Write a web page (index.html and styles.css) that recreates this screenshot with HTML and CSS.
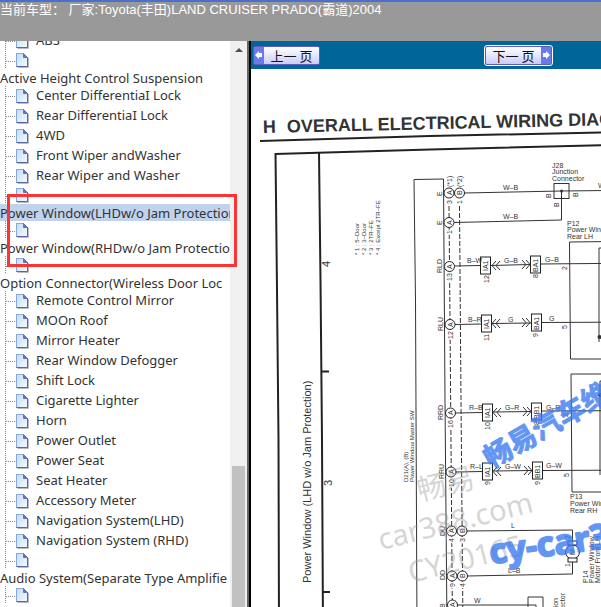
FILE: index.html
```html
<!DOCTYPE html>
<html lang="zh-CN">
<head>
  <meta charset="UTF-8">
  <title>LAND CRUISER PRADO 2004</title>
  <link rel="stylesheet" href="styles.css">
</head>
<body>

<svg class="defs" aria-hidden="true">
  <defs>
    <linearGradient id="paper" x1="0" y1="0" x2="1" y2="1">
      <stop offset="0" stop-color="#c4dcf8"/>
      <stop offset="1" stop-color="#f4fbff"/>
    </linearGradient>
    <symbol id="page" viewBox="0 0 13 15">
      <path d="M1.5 14.5h11V5" fill="none" stroke="#b9b9c4"/>
      <path d="M.5.5h7l4 4v9H.5z" fill="url(#paper)" stroke="#6f83bd"/>
      <path d="M.5 13V.5h7" fill="none" stroke="#84a9de"/>
      <path d="M7.5.5v4h4z" fill="#6474b4" stroke="#6474b4"/>
      <path d="M.5 13.5h11v-9" fill="none" stroke="#5b66a5"/>
    </symbol>
  </defs>
</svg>

<header class="topbar">当前车型： 厂家:Toyota(丰田)LAND CRUISER PRADO(霸道)2004</header>

<div class="frames">
  <nav class="sidebar">
    <ul class="tree">
      <li><svg class="icon"><use href="#page"/></svg><a href="#">ABS</a></li>
      <li class="blank"><svg class="icon"><use href="#page"/></svg></li>
      <li class="group"><a href="#">Active Height Control Suspension</a></li>
      <li><svg class="icon"><use href="#page"/></svg><a href="#">Center DifferentiaI Lock</a></li>
      <li><svg class="icon"><use href="#page"/></svg><a href="#">Rear DifferentiaI Lock</a></li>
      <li><svg class="icon"><use href="#page"/></svg><a href="#">4WD</a></li>
      <li><svg class="icon"><use href="#page"/></svg><a href="#">Front Wiper andWasher</a></li>
      <li><svg class="icon"><use href="#page"/></svg><a href="#">Rear Wiper and Washer</a></li>
      <li class="blank"><svg class="icon"><use href="#page"/></svg></li>
      <li class="group selected"><a href="#">Power Window(LHDw/o Jam Protection)</a></li>
      <li class="blank"><svg class="icon"><use href="#page"/></svg></li>
      <li class="group"><a href="#">Power Window(RHDw/o Jam Protection)</a></li>
      <li class="blank"><svg class="icon"><use href="#page"/></svg></li>
      <li class="group"><a href="#">Option Connector(Wireless Door Loc</a></li>
      <li><svg class="icon"><use href="#page"/></svg><a href="#">Remote Control Mirror</a></li>
      <li><svg class="icon"><use href="#page"/></svg><a href="#">MOOn Roof</a></li>
      <li><svg class="icon"><use href="#page"/></svg><a href="#">Mirror Heater</a></li>
      <li><svg class="icon"><use href="#page"/></svg><a href="#">Rear Window Defogger</a></li>
      <li><svg class="icon"><use href="#page"/></svg><a href="#">Shift Lock</a></li>
      <li><svg class="icon"><use href="#page"/></svg><a href="#">Cigarette Lighter</a></li>
      <li><svg class="icon"><use href="#page"/></svg><a href="#">Horn</a></li>
      <li><svg class="icon"><use href="#page"/></svg><a href="#">Power Outlet</a></li>
      <li><svg class="icon"><use href="#page"/></svg><a href="#">Power Seat</a></li>
      <li><svg class="icon"><use href="#page"/></svg><a href="#">Seat Heater</a></li>
      <li><svg class="icon"><use href="#page"/></svg><a href="#">Accessory Meter</a></li>
      <li><svg class="icon"><use href="#page"/></svg><a href="#">Navigation System(LHD)</a></li>
      <li><svg class="icon"><use href="#page"/></svg><a href="#">Navigation System (RHD)</a></li>
      <li class="blank"><svg class="icon"><use href="#page"/></svg></li>
      <li class="group"><a href="#">Audio System(Separate Type Amplifie</a></li>
      <li class="blank"><svg class="icon"><use href="#page"/></svg></li>
    </ul>
    <div class="scrollbar">
      <div class="arrow-up"></div>
      <div class="thumb"></div>
    </div>
    <div class="marker"></div>
  </nav>

  <main class="viewer">
    <div class="pager">
      <button type="button" class="page-btn">
        <span class="arrow"><svg viewBox="0 0 10 16"><path d="M1 8l4-4v2h3v4H5v2z" fill="#fff"/></svg></span>
        <span class="label">上一 页</span>
      </button>
      <button type="button" class="page-btn next">
        <span class="label">下一 页</span>
        <span class="arrow"><svg viewBox="0 0 10 16"><path d="M9 8L5 4v2H2v4h3v2z" fill="#fff"/></svg></span>
      </button>
    </div>

    <svg class="diagram" viewBox="251 69 400 560" width="400" height="560">
      <!-- sheet title and frame -->
      <g class="title" transform="rotate(-1.3 264 133)">
        <text x="263" y="133">H</text>
        <text x="287" y="133">OVERALL ELECTRICAL WIRING DIAGRAM</text>
      </g>
      <g class="frame">
        <path d="M260 141L430 136L651 131.500"/>
        <path d="M275 154L430 149.500L651 144"/>
        <path d="M275.500 153L277 290L278.500 440L279 629"/>
        <path d="M319 152L320.500 280L322 440L323 629"/>
        <path d="M322 371.500h7M323 592h7"/>
      </g>
      <text class="sheet" transform="translate(330 267) rotate(-90)">4</text>
      <text class="sheet" transform="translate(332 486) rotate(-90)">3</text>
      <text class="sheet" transform="translate(311 583) rotate(-90)">Power Window (LHD w/o Jam Protection)</text>

      <g class="tiny small">
        <text transform="translate(359 255) rotate(-90)">* 1 : 5–Door</text>
        <text transform="translate(366 255) rotate(-90)">* 2 : 3–Door</text>
        <text transform="translate(373 255) rotate(-90)">* 3 : 2TR–FE</text>
        <text transform="translate(380 255) rotate(-90)">* 4 : Except 2TR–FE</text>
        <text transform="translate(408 482) rotate(-90)">D21(A), (B)</text>
        <text transform="translate(414 482) rotate(-90)">Power Window Master SW</text>
      </g>

      <!-- master switch -->
      <g class="wire">
        <path d="M417 629L415.500 300L414 179.500L443.500 179L445 400L447 629"/>
        <path class="dash" d="M449 206L450 320L452.500 629M459.500 206L461 400L463 629"/>
      </g>

      <!-- wires -->
      <g class="wire">
        <path d="M464.500 193L561.500 191L651 190M561.500 191V220L454 222.500"/>
        <path d="M454.500 266L480 265.500M491 265.500L530 264.500M540 264L651 263"/>
        <path d="M455 324.500L481 324M492 323.500L531 323M541 322.500L651 322"/>
        <path d="M455.500 413L482 412.500M493 412L532 411.500M542 411L651 410.500"/>
        <path d="M456 472L482 471.500M493 471L532 470.500M542 470.500L651 470"/>
        <path d="M467 531L572.500 530V541M467 576L572.500 574V562"/>
        <path d="M457 605H536M528 629V597h15v32M536 605v24"/>
        <path d="M651 241L569.500 242L570.500 359H651M651 374H571L572 492H651"/>
        <path d="M651 248H599V342M651 381H600V475"/>
        <rect x="554" y="183.500" width="15" height="15"/>
      </g>
      <circle cx="561.500" cy="191" r="1.500"/>
      <circle cx="599.500" cy="337" r="2"/>
      <circle cx="600" cy="395" r="2"/>

      <g class="wire arrows">
        <path d="M496 261l-4 4.500l4 4.500M500 261l-4 4.500l4 4.500M522 260l4 4.500l-4 4.500M526 260l4 4.500l-4 4.500"/>
        <path d="M496 319l-4 4.500l4 4.500M500 319l-4 4.500l4 4.500M522 318l4 4.500l-4 4.500M526 318l4 4.500l-4 4.500"/>
        <path d="M497 408l-4 4.500l4 4.500M501 408l-4 4.500l4 4.500M523 407l4 4.500l-4 4.500M527 407l4 4.500l-4 4.500"/>
        <path d="M497 467l-4 4.500l4 4.500M501 467l-4 4.500l4 4.500M524 466l4 4.500l-4 4.500M528 466l4 4.500l-4 4.500"/>
      </g>

      <!-- pin numbers on the switch, with the dashes broken behind them -->
      <g class="tiny number">
        <text transform="translate(452 187) rotate(-90)">(*1)</text>
        <text transform="translate(462 187) rotate(-90)">(*2)</text>
        <text transform="translate(452 204) rotate(-90)">3</text>
        <text transform="translate(462 204) rotate(-90)">1</text>
        <text transform="translate(452 234) rotate(-90)">1</text>
        <text transform="translate(452 281) rotate(-90)">13</text>
        <text transform="translate(453 339) rotate(-90)">12</text>
        <text transform="translate(453 428) rotate(-90)">16</text>
        <text transform="translate(454 487) rotate(-90)">10</text>
        <text transform="translate(454 542) rotate(-90)">4</text>
        <text transform="translate(465 542) rotate(-90)">3</text>
        <text transform="translate(455 587) rotate(-90)">9</text>
        <text transform="translate(465 587) rotate(-90)">4</text>
      </g>

      <g class="pin">
        <rect x="480.500" y="257" width="10" height="17"/>
        <rect x="530.500" y="256" width="10" height="17"/>
        <rect x="481.500" y="315" width="10" height="17"/>
        <rect x="531.500" y="314" width="10" height="17"/>
        <rect x="482.500" y="404" width="10" height="17"/>
        <rect x="531.500" y="403" width="10" height="17"/>
        <rect x="482.500" y="463" width="10" height="17"/>
        <rect x="532.500" y="462" width="10" height="17"/>
        <circle cx="449" cy="193" r="5"/>
        <circle cx="459.500" cy="193" r="5"/>
        <circle cx="449" cy="222.500" r="5"/>
        <circle cx="449.500" cy="266.500" r="5"/>
        <circle cx="450" cy="324.500" r="5"/>
        <circle cx="450.500" cy="413" r="5"/>
        <circle cx="451" cy="472" r="5"/>
        <circle cx="451.500" cy="531" r="5"/>
        <circle cx="462" cy="531" r="5"/>
        <circle cx="452" cy="576" r="5"/>
        <circle cx="462.500" cy="576" r="5"/>
        <circle cx="452.500" cy="605" r="5"/>
        <circle cx="572.500" cy="552" r="7"/>
        <rect x="568" y="541" width="9" height="4"/>
        <rect x="568" y="558" width="9" height="4"/>
      </g>

      <!-- wire colours -->
      <g class="tiny">
        <text x="503" y="190">W–B</text>
        <text x="503" y="219">W–B</text>
        <text x="598" y="188">W–B</text>
        <text x="467" y="263">B–W</text>
        <text x="504" y="263">G–B</text>
        <text x="545" y="262">G–B</text>
        <text x="468" y="322">B–R</text>
        <text x="508" y="322">G</text>
        <text x="549" y="321">G</text>
        <text x="469" y="410">R–B</text>
        <text x="505" y="410">G–R</text>
        <text x="546" y="410">G–R</text>
        <text x="470" y="469">R–L</text>
        <text x="505" y="469">G–W</text>
        <text x="546" y="468">G–W</text>
        <text x="511" y="528">L</text>
        <text x="508" y="573">L–B</text>
        <text x="474" y="603">W</text>
        <text x="552" y="168">J28</text>
        <text x="552" y="174">Junction</text>
        <text x="552" y="181">Connector</text>
        <text x="567" y="226">P12</text>
        <text x="567" y="232">Power Window</text>
        <text x="567" y="239">Rear LH</text>
        <text x="570" y="499">P13</text>
        <text x="570" y="506">Power Window</text>
        <text x="570" y="513">Rear RH</text>
      </g>

      <!-- terminals and connectors, read from the side -->
      <g class="tiny">
        <text transform="translate(442 196) rotate(-90)">E</text>
        <text transform="translate(442 225) rotate(-90)">E</text>
        <text transform="translate(442 273) rotate(-90)">RLD</text>
        <text transform="translate(443 331) rotate(-90)">RLU</text>
        <text transform="translate(443 420) rotate(-90)">RRD</text>
        <text transform="translate(444 479) rotate(-90)">RRU</text>
        <text transform="translate(445 536) rotate(-90)">DU</text>
        <text transform="translate(445 580) rotate(-90)">DD</text>
        <text transform="translate(445 608) rotate(-90)">B</text>

        <text transform="translate(452 195) rotate(-90)">A</text>
        <text transform="translate(462 195) rotate(-90)">B</text>
        <text transform="translate(452 225) rotate(-90)">A</text>
        <text transform="translate(452 269) rotate(-90)">A</text>
        <text transform="translate(453 327) rotate(-90)">A</text>
        <text transform="translate(453 415) rotate(-90)">A</text>
        <text transform="translate(454 474) rotate(-90)">A</text>
        <text transform="translate(454 533) rotate(-90)">A</text>
        <text transform="translate(465 533) rotate(-90)">B</text>
        <text transform="translate(455 578) rotate(-90)">A</text>
        <text transform="translate(465 578) rotate(-90)">B</text>
        <text transform="translate(455 607) rotate(-90)">A</text>
        <text transform="translate(575 555) rotate(-90)">M</text>

        <text transform="translate(488 271) rotate(-90)">IA1</text>
        <text transform="translate(538 272) rotate(-90)">BA1</text>
        <text transform="translate(489 329) rotate(-90)">IA1</text>
        <text transform="translate(539 330) rotate(-90)">BA1</text>
        <text transform="translate(490 418) rotate(-90)">IA1</text>
        <text transform="translate(539 419) rotate(-90)">BB1</text>
        <text transform="translate(490 477) rotate(-90)">IA1</text>
        <text transform="translate(540 478) rotate(-90)">BB1</text>

        <text transform="translate(489 283) rotate(-90)">12</text>
        <text transform="translate(538 278) rotate(-90)">8</text>
        <text transform="translate(489 341) rotate(-90)">11</text>
        <text transform="translate(538 337) rotate(-90)">9</text>
        <text transform="translate(490 430) rotate(-90)">10</text>
        <text transform="translate(539 425) rotate(-90)">8</text>
        <text transform="translate(490 485) rotate(-90)">9</text>
        <text transform="translate(540 485) rotate(-90)">9</text>
        <text transform="translate(567 270) rotate(-90)">2</text>
        <text transform="translate(567 329) rotate(-90)">5</text>
        <text transform="translate(568 417) rotate(-90)">2</text>
        <text transform="translate(569 477) rotate(-90)">5</text>
        <text transform="translate(570 539) rotate(-90)">2</text>
        <text transform="translate(570 567) rotate(-90)">1</text>
        <text transform="translate(551 198) rotate(-90)">B</text>
        <text transform="translate(559 207) rotate(-90)">B</text>
        <text transform="translate(578 197) rotate(-90)">B</text>

        <text transform="translate(588 583) rotate(-90)">P14</text>
        <text transform="translate(594 583) rotate(-90)">Power Window</text>
        <text transform="translate(600 583) rotate(-90)">Motor Front LH</text>
        <text class="from-top" transform="translate(558 598) rotate(-90)">Junction</text>
        <text class="from-top" transform="translate(565 593) rotate(-90)">Connector</text>
      </g>

      <!-- watermarks -->
      <g class="mark-grey">
        <text transform="translate(420 501) rotate(-14)">畅易</text>
        <text transform="translate(381 550) rotate(-14)">car388.com</text>
        <text transform="translate(411 583) rotate(-14)">CY20165</text>
      </g>
      <g class="mark-blue">
        <text transform="translate(491 469) rotate(-30)">畅易汽车维修</text>
        <text class="latin" transform="translate(491 564) rotate(-8)">cy-car388</text>
      </g>
    </svg>
  </main>
</div>

</body>
</html>
```
FILE: styles.css
```css
* {
  box-sizing: border-box;
}
body {
  margin: 0;
  height: 100vh;
  display: flex;
  flex-direction: column;
  overflow: hidden;
  background: #fff;
  font-family: "Noto Sans", "Noto Sans CJK SC", sans-serif;
}
.defs {
  position: absolute;
  width: 0;
  height: 0;
}
.topbar {
  flex: none;
  height: 41px;
  border-top: 2px solid #4a6fd0;
  background: #999;
  color: #fff;
  font: 13px/16px "Liberation Sans", "Noto Sans CJK SC", sans-serif;
  white-space: nowrap;
}
.frames {
  flex: 1;
  min-height: 0;
  display: flex;
}

/* left tree */
.sidebar {
  position: relative;
  flex: none;
  width: 251px;
  display: flex;
  overflow: hidden;
  border-right: 2px solid #000;
}
.tree {
  flex: 1;
  min-width: 0;
  margin: -10px 0 0;
  padding: 0;
  list-style: none;
  overflow: hidden;
  font-size: 13px;
}
.tree li {
  display: flex;
  align-items: center;
  height: 20px;
  white-space: nowrap;
  background: repeating-linear-gradient(#888 0 1px, transparent 1px 2px) 5px 0 / 1px 100% no-repeat,
    repeating-linear-gradient(90deg, #888 0 1px, transparent 1px 2px) 6px 10px / 10px 1px no-repeat;
}
.tree a {
  padding-bottom: 2px;
  color: #333;
  text-decoration: none;
}
.tree .icon {
  flex: none;
  width: 13px;
  height: 15px;
  margin: 1px 7px 0 16px;
}
.tree .blank {
  height: 18px;
}
.tree .group {
  height: 17px;
  background: none;
}
.tree .group a {
  padding: 0;
}
.tree .selected {
  background: #c0d2ec;
}
.scrollbar {
  flex: none;
  width: 19px;
  background: #f0f0f0;
  border-right: 2px solid #666;
  display: flex;
  flex-direction: column;
  align-items: center;
}
.arrow-up {
  margin-top: 7px;
  border: 4px solid transparent;
  border-top: 0;
  border-bottom-color: #505050;
}
.thumb {
  width: 13px;
  margin-top: auto;
  height: 25%;
  background: #c1c1c1;
}
.marker {
  position: absolute;
  left: 7px;
  top: 153px;
  width: 230px;
  height: 73px;
  border: 3px solid #fa3535;
}

/* diagram frame */
.viewer {
  flex: 1;
  min-width: 0;
  overflow: hidden;
}
.pager {
  display: flex;
  gap: 165px;
  height: 28px;
  padding: 5px 2px;
  background: #069;
}
.page-btn {
  flex: none;
  display: flex;
  width: 67px;
  height: 19px;
  padding: 0;
  border: 1px solid #5b5bc0;
  border-radius: 2px;
  background: linear-gradient(#fff, #c9cdf8);
  color: #111;
  font: 13px/17px "Noto Sans CJK SC", sans-serif;
  cursor: pointer;
}
.page-btn.next {
  outline: 1px solid #fff;
}
.page-btn .label {
  flex: 1;
  text-align: center;
}
.page-btn .arrow {
  width: 10px;
  background: #6a7ae6;
}
.page-btn svg {
  display: block;
  width: 10px;
  height: 16px;
}
.diagram {
  display: block;
  font-family: "Liberation Sans", Arial, sans-serif;
  fill: #333;
}
.title {
  font-size: 18px;
  font-weight: bold;
}
.frame path {
  fill: none;
  stroke: #222;
  stroke-width: 2px;
}
.sheet {
  font-size: 11px;
}
.tiny {
  font-size: 7px;
}
.small {
  font-size: 6px;
}
.number {
  paint-order: stroke;
  stroke: #fff;
  stroke-width: 3px;
}
.from-top {
  text-anchor: end;
}
.wire {
  fill: none;
  stroke: #333;
}
.dash {
  stroke-dasharray: 5 2;
}
.pin {
  fill: #fff;
  stroke: #222;
}
.mark-grey {
  font: 29px "Noto Sans", "Noto Sans CJK SC", sans-serif;
  fill: #999;
  opacity: .4;
}
.mark-blue {
  font: bold 28px "Noto Sans CJK SC", sans-serif;
  fill: #3d7df0;
  stroke: #3d7df0;
  stroke-linejoin: round;
  opacity: .8;
}
.latin {
  font: bold 34px "Noto Sans", sans-serif;
  stroke-width: 2px;
}
```
